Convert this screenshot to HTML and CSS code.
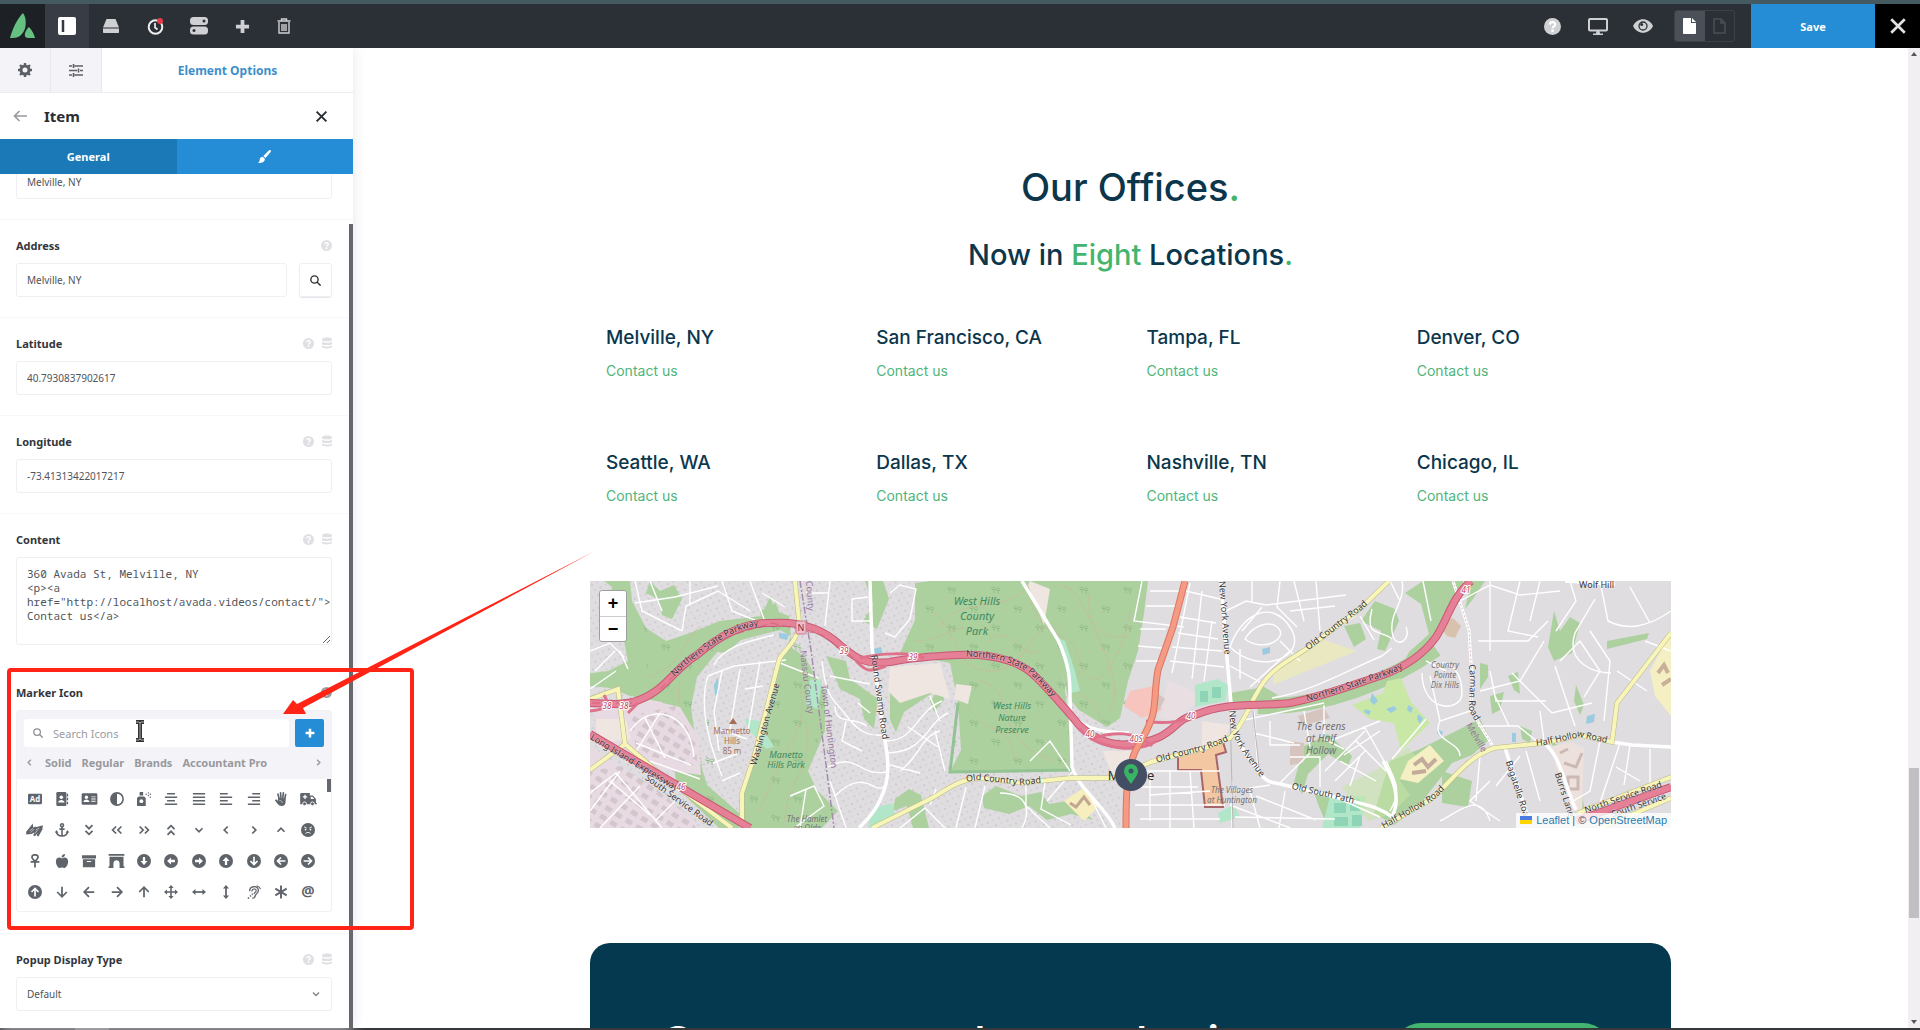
FILE: index.html
```html
<!DOCTYPE html>
<html lang="en">
<head>
<meta charset="utf-8">
<meta name="viewport" content="width=device-width, initial-scale=1">
<title>Avada Live Builder</title>
<link rel="stylesheet" href="styles.css">
</head>
<body>
<svg class="sprite" aria-hidden="true">
  <defs>
    <symbol id="help" viewBox="0 0 16 16"><circle cx="8" cy="8" r="8" fill="currentColor"/><path class="knock" d="M5.400 6.200c.2-3.200 5.300-3 5.200 0 0 1.700-2.500 1.600-2.500 3.400" stroke-width="2" fill="none"/><circle class="knock-fill" cx="8" cy="12" r="1.300"/></symbol>
    <symbol id="data" viewBox="0 0 16 18"><g fill="currentColor"><path d="M0 3c0-4 16-4 16 0v1.500c0 2.500-16 2.500-16 0z"/><path d="M0 7c3 2 13 2 16 0v3.500c0 2.500-16 2.500-16 0z"/><path d="M0 13c3 2 13 2 16 0v2.500c0 3-16 3-16 0z"/></g></symbol>
    <symbol id="search" viewBox="0 0 16 16"><g fill="none" stroke="currentColor" stroke-width="2"><circle cx="6.500" cy="6.500" r="5.300"/><path d="M10.500 10.500l5 5"/></g></symbol>
    <symbol id="plus" viewBox="0 0 16 16"><path fill="currentColor" d="M6 1h4v5h5v4h-5v5H6v-5H1V6h5z"/></symbol>
    <symbol id="cross" viewBox="0 0 16 16"><path d="M2 2l12 12M14 2L2 14" stroke="currentColor" stroke-width="2.400" fill="none"/></symbol>
    <symbol id="ad" viewBox="0 0 16 16"><rect y="2" width="16" height="12" rx="1.500" fill="currentColor"/><text x="8" y="11.500" text-anchor="middle" font-size="9" font-weight="700" fill="#fff">Ad</text></symbol>
    <symbol id="book" viewBox="0 0 16 16"><rect x="1.500" width="11.500" height="16" rx="1.500" fill="currentColor"/><path d="M13.500 2h1.500v3h-1.500zM13.500 6.500h1.500v3h-1.500zM13.500 11h1.500v3h-1.500z" fill="currentColor"/><circle cx="7.200" cy="6" r="2" fill="#fff"/><path d="M3.500 12c.3-4 7-4 7.400 0z" fill="#fff"/></symbol>
    <symbol id="idcard" viewBox="0 0 18 16"><rect y="1.500" width="18" height="13" rx="1.500" fill="currentColor"/><circle cx="5.500" cy="6" r="1.900" fill="#fff"/><path d="M2 11.500c.3-4 6.700-4 7 0zM11 5h5v1h-5zM11 7.500h5v1h-5zM11 10h5v1h-5z" fill="#fff"/></symbol>
    <symbol id="adjust" viewBox="0 0 16 16"><circle cx="8" cy="8" r="7" fill="none" stroke="currentColor" stroke-width="1.800"/><path d="M8 1a7 7 0 0 0 0 14z" fill="currentColor"/></symbol>
    <symbol id="spray" viewBox="0 0 16 16"><g fill="currentColor"><path d="M3 0h4v4H3zM2 5h6c2 1 2 2 2 3v8H0V8c0-1 0-2 2-3z"/><circle cx="10.500" cy="2.500" r=".8"/><circle cx="13" cy="1" r=".8"/><circle cx="13" cy="4" r=".8"/><circle cx="15.200" cy="2.500" r=".8"/><circle cx="15.200" cy="6" r=".8"/></g><circle cx="5" cy="10.500" r="2.200" fill="#fff"/></symbol>
    <symbol id="acenter" viewBox="0 0 16 16"><path d="M3.500 2h9M1 6h14M3.500 10h9M1 14h14" stroke="currentColor" stroke-width="1.800"/></symbol>
    <symbol id="ajustify" viewBox="0 0 16 16"><path d="M1 2h14M1 6h14M1 10h14M1 14h14" stroke="currentColor" stroke-width="1.800"/></symbol>
    <symbol id="aleft" viewBox="0 0 16 16"><path d="M1 2h9M1 6h14M1 10h9M1 14h14" stroke="currentColor" stroke-width="1.800"/></symbol>
    <symbol id="aright" viewBox="0 0 16 16"><path d="M6 2h9M1 6h14M6 10h9M1 14h14" stroke="currentColor" stroke-width="1.800"/></symbol>
    <symbol id="hand" viewBox="0 0 16 16"><path d="M4.500 2.500L6 8M7.500 1l.5 7M10.700 1L10 8M13.300 3L12 9" stroke="currentColor" stroke-width="1.900" stroke-linecap="round"/><path d="M4.500 7h8.700v4.500c0 3-1.500 4.500-4.500 4.500-4 0-5.200-3.500-7.700-6.500.7-1.500 2-1 3.500.7z" fill="currentColor"/><path d="M6 9.500c2 0 3 1 3.500 3" stroke="#fff" stroke-width=".6" fill="none"/></symbol>
    <symbol id="ambulance" viewBox="0 0 19 16"><path d="M1.500 1H11v3h3.500L18 8v4.500h1V14H0V2.500A1.500 1.500 0 0 1 1.500 1z" fill="currentColor"/><path d="M12 5.500h2l2 2.500h-4z" fill="#fff"/><path d="M5.500 3v5M3 5.500h5" stroke="#fff" stroke-width="1.500"/><circle cx="5" cy="13.500" r="2.200" fill="currentColor" stroke="#fff"/><circle cx="14" cy="13.500" r="2.200" fill="currentColor" stroke="#fff"/></symbol>
    <symbol id="sign" viewBox="0 0 19 16"><path d="M0 10L5.500 3l2-2.500L8 5l3-1.200L10 6l1 4-5 2.500-6 .5zM10 5l9-2.500-.5 5L14 15.500l-2-1 1-3-3 3.500-2-1 2-4z" fill="currentColor"/><path d="M4 9l4-3M5 11l4-4M11 8l4-2M10 12l3-4" stroke="#fff" stroke-width=".6"/></symbol>
    <symbol id="anchor" viewBox="0 0 16 16"><g fill="none" stroke="currentColor" stroke-width="1.800"><circle cx="8" cy="2.600" r="1.700"/><path d="M8 4.500V15M5 7h6M1.500 9.500C2 13 5 14.800 8 14.800s6-1.800 6.500-5.300"/></g><path d="M0 11l1.500-3L4 11zM12 11l2.500-3L16 11z" fill="currentColor"/></symbol>
    <symbol id="ddown" viewBox="0 0 16 16"><path d="M4 2.500l4 4 4-4M4 9l4 4 4-4" class="ln"/></symbol>
    <symbol id="dup" viewBox="0 0 16 16"><path d="M4 7l4-4 4 4M4 13.500l4-4 4 4" class="ln"/></symbol>
    <symbol id="dleft" viewBox="0 0 16 16"><path d="M7 4L3 8l4 4M13 4L9 8l4 4" class="ln"/></symbol>
    <symbol id="dright" viewBox="0 0 16 16"><path d="M3 4l4 4-4 4M9 4l4 4-4 4" class="ln"/></symbol>
    <symbol id="cdown" viewBox="0 0 16 16"><path d="M4 6l4 4 4-4" class="ln"/></symbol>
    <symbol id="cup" viewBox="0 0 16 16"><path d="M4 10l4-4 4 4" class="ln"/></symbol>
    <symbol id="cleft" viewBox="0 0 16 16"><path d="M10 4L6 8l4 4" class="ln"/></symbol>
    <symbol id="cright" viewBox="0 0 16 16"><path d="M6 4l4 4-4 4" class="ln"/></symbol>
    <symbol id="angry" viewBox="0 0 16 16"><circle cx="8" cy="8" r="8" fill="currentColor"/><path d="M3.500 4.500l3 1.300M12.500 4.500l-3 1.300M5 12c1.500-1.600 4.500-1.600 6 0" stroke="#fff" fill="none"/><circle cx="5.200" cy="7.500" r="1" fill="#fff"/><circle cx="10.800" cy="7.500" r="1" fill="#fff"/></symbol>
    <symbol id="ankh" viewBox="0 0 16 16"><path d="M8 8.500C5.500 6 4.500 5 4.500 3.500 4.500 0 11.500 0 11.500 3.500c0 1.500-1 2.500-3.500 5zM3 9h10M8 8v7.500" fill="none" stroke="currentColor" stroke-width="2"/></symbol>
    <symbol id="apple" viewBox="0 0 16 16"><path d="M8 5C5 3 1 4 1 8.500 1 12 3.500 16 5.500 16 7 16 7 15.500 8 15.500s1 .5 2.500.5c2 0 4.500-4 4.500-7.500C15 4 11 3 8 5zM7.500 4C7.500 1.500 9 0 11.500 0c0 2.500-1.500 4-4 4z" fill="currentColor"/></symbol>
    <symbol id="archive" viewBox="0 0 16 16"><path d="M0 1.500h16V5H0zM1 6h14v9H1z" fill="currentColor"/><path d="M5.500 8h5v1.200h-5z" fill="#fff"/></symbol>
    <symbol id="arch" viewBox="0 0 18 16"><path d="M0 0h18v2H0zM1 3h16v11h1v2h-5.500v-5c0-5-7-5-7 0v5H0v-2h1z" fill="currentColor"/></symbol>
    <symbol id="disc" viewBox="0 0 16 16"><circle cx="8" cy="8" r="8" fill="currentColor"/><path d="M6.700 3.500h2.600V8H12l-4 4.500L4 8h2.700z" fill="#fff"/></symbol>
    <symbol id="disc2" viewBox="0 0 16 16"><circle cx="8" cy="8" r="8" fill="currentColor"/><path d="M8 3v9M4 8l4 4 4-4" fill="none" stroke="#fff" stroke-width="1.900"/></symbol>
    <symbol id="arrow" viewBox="0 0 16 16"><path d="M8 2v11.500M2.500 8L8 13.500 13.500 8" fill="none" stroke="currentColor" stroke-width="2"/></symbol>
    <symbol id="arrows" viewBox="0 0 16 16"><path d="M8 2v12M2 8h12" stroke="currentColor" stroke-width="1.800"/><path d="M8 0l3 3.500H5zM8 16l3-3.500H5zM0 8l3.500-3v6zM16 8l-3.500-3v6z" fill="currentColor"/></symbol>
    <symbol id="arrowsh" viewBox="0 0 16 16"><path d="M2 8h12" stroke="currentColor" stroke-width="2"/><path d="M0 8l4-3.500v7zM16 8l-4-3.500v7z" fill="currentColor"/></symbol>
    <symbol id="ear" viewBox="0 0 16 16"><g fill="none" stroke="currentColor" stroke-width="1.500"><path d="M3 7c0-6 9-7 10-1 .3 3-3 4-3.500 6S8 15.500 6 15"/><path d="M5.500 7.500c0-3.500 5-4 5-1 0 2-2 1.500-2.500 4" stroke-width="1.300"/><path d="M11 .8c2.500.7 4 2 4.500 4" stroke-width="1.200"/><path d="M1 15.500l1.300-1.300M3.500 13l1-1M5.500 11l1-1" stroke-width="1.700"/></g></symbol>
    <symbol id="asterisk" viewBox="0 0 16 16"><path d="M8 .5v15M1.500 4.200l13 7.600M14.500 4.200l-13 7.600" stroke="currentColor" stroke-width="2.200"/></symbol>
    <symbol id="at" viewBox="0 0 16 16"><text x="8" y="13" text-anchor="middle" font-size="17" font-weight="700" fill="currentColor">@</text></symbol>
  </defs>
</svg>

<header class="topbar">
  <a class="brand" href="#" aria-label="Avada"><svg viewBox="0 0 26 26" width="26" height="26"><path d="M13 0c4 5 4 17-2 22-3 3-7 3-11 3C3 14 8 5 13 0zM19 14c3 3 5 7 6 11h-7c-3 0-4-3-2.500-6 .8-2 2-4 3.500-5z" fill="#65c081"/></svg></a>
  <nav class="tools">
    <button class="tool tool-active" type="button" aria-label="Sidebar"><svg viewBox="0 0 18 18" width="18" height="18"><rect width="18" height="18" rx="2" fill="#fff"/><path d="M5 3v12" stroke="#343941" stroke-width="2.500"/></svg></button>
    <button class="tool" type="button" aria-label="Library"><svg viewBox="0 0 16 14" width="16" height="14"><path d="M3.500 0h9L16 8.500H0zM0 9.500h16V13c0 .6-.4 1-1 1H1c-.6 0-1-.4-1-1z" fill="currentColor"/></svg></button>
    <button class="tool" type="button" aria-label="History"><svg viewBox="0 0 17 17" width="17" height="17"><circle cx="8.500" cy="9" r="6.800" fill="none" stroke="#eee" stroke-width="2"/><path d="M8 5v4.500l2.500 2" stroke="#eee" stroke-width="1.700" fill="none"/><circle cx="13" cy="3" r="3" fill="#e83b49"/></svg></button>
    <button class="tool" type="button" aria-label="Preferences"><svg viewBox="0 0 18 18" width="18" height="18"><rect width="18" height="8" rx="3.500" fill="currentColor"/><rect y="9.500" width="18" height="8" rx="3.500" fill="currentColor"/><circle cx="14" cy="4" r="1.500" fill="#2b3037"/><circle cx="4" cy="13.500" r="1.500" fill="#2b3037"/></svg></button>
    <button class="tool tool-slim" type="button" aria-label="Add"><svg width="15" height="15"><use href="#plus"/></svg></button>
    <button class="tool tool-slim" type="button" aria-label="Delete"><svg viewBox="0 0 14 16" width="14" height="16"><path d="M.5 3h13M4.500 3V1h5v2M2 4v11h10V4M5 6v7M7 6v7M9 6v7" fill="none" stroke="currentColor" stroke-width="1.400"/></svg></button>
  </nav>
  <nav class="tools tools-right">
    <button class="tool" type="button" aria-label="Help"><svg width="17" height="17"><use href="#help"/></svg></button>
    <button class="tool" type="button" aria-label="Screen size"><svg viewBox="0 0 20 17" width="20" height="17"><rect x="1" y="1" width="18" height="11.500" rx="1" fill="none" stroke="currentColor" stroke-width="2"/><path d="M8.500 13h3l.5 2.500h3V17H5v-1.500h3z" fill="currentColor"/></svg></button>
    <button class="tool" type="button" aria-label="Preview"><svg viewBox="0 0 20 14" width="20" height="14"><path d="M0 7C4-2 16-2 20 7c-4 9-16 9-20 0z" fill="currentColor"/><circle cx="10" cy="7" r="4" fill="none" stroke="#2b3037" stroke-width="1.300"/><circle cx="8.700" cy="5.500" r="1.500" fill="#2b3037"/></svg></button>
  </nav>
  <div class="pages">
    <button class="page-button page-on" type="button" aria-label="Page"><svg viewBox="0 0 13 16" width="13" height="16"><path d="M1 0h7v5h5v10c0 .6-.4 1-1 1H1c-.6 0-1-.4-1-1V1c0-.6.400-1 1-1zM9 0l4 4H9z" fill="currentColor"/></svg></button>
    <button class="page-button" type="button" aria-label="Draft"><svg viewBox="0 0 13 16" width="13" height="16"><path d="M1 1h7l4 4v10H1zM8 1v4h4" fill="none" stroke="currentColor" stroke-width="1.500"/></svg></button>
  </div>
  <button class="save" type="button">Save</button>
  <button class="close" type="button" aria-label="Close"><svg width="18" height="18"><use href="#cross"/></svg></button>
</header>

<div class="workspace">
  <aside class="sidebar">
    <nav class="tabs">
      <button class="tab" type="button" aria-label="Settings"><svg viewBox="0 0 14 14" width="14" height="14"><circle cx="7" cy="7" r="4" fill="none" stroke="currentColor" stroke-width="3"/><path d="M7 0v3M7 11v3M0 7h3M11 7h3M2 2l2 2M10 10l2 2M12 2l-2 2M4 10l-2 2" stroke="currentColor" stroke-width="2.400"/></svg></button>
      <button class="tab" type="button" aria-label="Options"><svg viewBox="0 0 14 13" width="14" height="13"><path d="M0 2h3M5.500 2H14M0 6.500h8M11 6.500h3M0 11h3M5.500 11H14M4.500 0v4M9.500 4.500v4M4.500 9v4" stroke="currentColor" stroke-width="1.600"/></svg></button>
      <button class="tab tab-main" type="button">Element Options</button>
    </nav>
    <div class="title-row">
      <button class="plain back" type="button" aria-label="Back"><svg viewBox="0 0 14 12" width="14" height="12"><path d="M14 6H1.500M6.500 1l-5 5 5 5" fill="none" stroke="currentColor" stroke-width="1.600"/></svg></button>
      <h2 class="title">Item</h2>
      <button class="plain" type="button" aria-label="Close item"><svg width="13" height="13"><use href="#cross"/></svg></button>
    </div>
    <div class="modes">
      <button class="mode mode-on" type="button">General</button>
      <button class="mode" type="button" aria-label="Design"><svg viewBox="0 0 13 13" width="13" height="13"><path d="M12.700.3c.5.500.3 1.200-.2 2L7.500 8 5.300 6l5.500-5.400c.7-.6 1.400-.7 1.900-.3zM4.700 6.700l2.200 2c.2 3-2.500 4.800-6.900 4 1.700-.8 1.500-2 1.800-3.700.4-1.500 1.600-2.300 2.900-2.300z" fill="currentColor"/></svg></button>
    </div>
    <div class="scroller">
      <form class="form">
        <div class="field field-cut"><input class="box" type="text" value="Melville, NY" aria-label="Title"></div>
        <div class="field">
          <div class="head"><label for="address">Address</label><svg class="hint" width="11" height="11"><use href="#help"/></svg></div>
          <div class="pair"><input class="box" id="address" type="text" value="Melville, NY"><button class="find" type="button" aria-label="Find"><svg width="11" height="11"><use href="#search"/></svg></button></div>
        </div>
        <div class="field">
          <div class="head"><label for="latitude">Latitude</label><svg class="hint" width="11" height="11"><use href="#help"/></svg><svg class="hint" width="10" height="12"><use href="#data"/></svg></div>
          <input class="box" id="latitude" type="text" value="40.7930837902617">
        </div>
        <div class="field">
          <div class="head"><label for="longitude">Longitude</label><svg class="hint" width="11" height="11"><use href="#help"/></svg><svg class="hint" width="10" height="12"><use href="#data"/></svg></div>
          <input class="box" id="longitude" type="text" value="-73.41313422017217">
        </div>
        <div class="field field-tall">
          <div class="head"><label for="content">Content</label><svg class="hint" width="11" height="11"><use href="#help"/></svg><svg class="hint" width="10" height="12"><use href="#data"/></svg></div>
          <textarea class="box code" id="content" wrap="off">360 Avada St, Melville, NY
&lt;p&gt;&lt;a
href="http://localhost/avada.videos/contact/"&gt;
Contact us&lt;/a&gt;</textarea>
        </div>
        <div class="field field-tall">
          <div class="head"><label for="icons">Marker Icon</label><svg class="hint hint-on" width="11" height="11"><use href="#help"/></svg></div>
          <div class="picker">
            <div class="picker-top">
              <div class="picker-search">
                <div class="search-box"><svg width="10" height="10"><use href="#search"/></svg><input id="icons" type="text" placeholder="Search Icons"></div>
                <button class="add" type="button" aria-label="Add icon set"><svg width="10" height="10"><use href="#plus"/></svg></button>
              </div>
              <div class="sets">
                <button class="plain" type="button" aria-label="Previous"><svg width="11" height="11"><use href="#cleft"/></svg></button>
                <button class="set" type="button">Solid</button>
                <button class="set" type="button">Regular</button>
                <button class="set" type="button">Brands</button>
                <button class="set" type="button">Accountant Pro</button>
                <button class="plain sets-next" type="button" aria-label="Next"><svg width="11" height="11"><use href="#cright"/></svg></button>
              </div>
            </div>
            <div class="icons">
              <button type="button"><svg><use href="#ad"/></svg></button>
              <button type="button"><svg><use href="#book"/></svg></button>
              <button type="button"><svg class="wide"><use href="#idcard"/></svg></button>
              <button type="button"><svg><use href="#adjust"/></svg></button>
              <button type="button"><svg><use href="#spray"/></svg></button>
              <button type="button"><svg><use href="#acenter"/></svg></button>
              <button type="button"><svg><use href="#ajustify"/></svg></button>
              <button type="button"><svg><use href="#aleft"/></svg></button>
              <button type="button"><svg><use href="#aright"/></svg></button>
              <button type="button"><svg><use href="#hand"/></svg></button>
              <button type="button"><svg class="wide"><use href="#ambulance"/></svg></button>
              <button type="button"><svg class="wide"><use href="#sign"/></svg></button>
              <button type="button"><svg><use href="#anchor"/></svg></button>
              <button type="button"><svg><use href="#ddown"/></svg></button>
              <button type="button"><svg><use href="#dleft"/></svg></button>
              <button type="button"><svg><use href="#dright"/></svg></button>
              <button type="button"><svg><use href="#dup"/></svg></button>
              <button type="button"><svg><use href="#cdown"/></svg></button>
              <button type="button"><svg><use href="#cleft"/></svg></button>
              <button type="button"><svg><use href="#cright"/></svg></button>
              <button type="button"><svg><use href="#cup"/></svg></button>
              <button type="button"><svg><use href="#angry"/></svg></button>
              <button type="button"><svg><use href="#ankh"/></svg></button>
              <button type="button"><svg><use href="#apple"/></svg></button>
              <button type="button"><svg><use href="#archive"/></svg></button>
              <button type="button"><svg class="wide"><use href="#arch"/></svg></button>
              <button type="button"><svg><use href="#disc"/></svg></button>
              <button type="button"><svg class="west"><use href="#disc"/></svg></button>
              <button type="button"><svg class="east"><use href="#disc"/></svg></button>
              <button type="button"><svg class="north"><use href="#disc"/></svg></button>
              <button type="button"><svg><use href="#disc2"/></svg></button>
              <button type="button"><svg class="west"><use href="#disc2"/></svg></button>
              <button type="button"><svg class="east"><use href="#disc2"/></svg></button>
              <button type="button"><svg class="north"><use href="#disc2"/></svg></button>
              <button type="button"><svg><use href="#arrow"/></svg></button>
              <button type="button"><svg class="west"><use href="#arrow"/></svg></button>
              <button type="button"><svg class="east"><use href="#arrow"/></svg></button>
              <button type="button"><svg class="north"><use href="#arrow"/></svg></button>
              <button type="button"><svg><use href="#arrows"/></svg></button>
              <button type="button"><svg><use href="#arrowsh"/></svg></button>
              <button type="button"><svg class="west"><use href="#arrowsh"/></svg></button>
              <button type="button"><svg><use href="#ear"/></svg></button>
              <button type="button"><svg><use href="#asterisk"/></svg></button>
              <button type="button"><svg><use href="#at"/></svg></button>
            </div>
            <span class="picker-thumb"></span>
          </div>
        </div>
        <div class="field field-last">
          <div class="head"><label for="popup">Popup Display Type</label><svg class="hint" width="11" height="11"><use href="#help"/></svg><svg class="hint" width="10" height="12"><use href="#data"/></svg></div>
          <div class="select"><select class="box" id="popup"><option>Default</option></select><svg width="12" height="12"><use href="#cdown"/></svg></div>
        </div>
      </form>
      <span class="side-thumb"></span>
    </div>
  </aside>

  <main class="canvas">
    <section class="offices">
      <h1>Our Offices<span class="accent">.</span></h1>
      <p class="lead">Now in <span class="accent">Eight</span> Locations<span class="accent">.</span></p>
      <div class="cities">
        <div><h3>Melville, NY</h3><a href="#">Contact us</a></div>
        <div><h3>San Francisco, CA</h3><a href="#">Contact us</a></div>
        <div><h3>Tampa, FL</h3><a href="#">Contact us</a></div>
        <div><h3>Denver, CO</h3><a href="#">Contact us</a></div>
        <div><h3>Seattle, WA</h3><a href="#">Contact us</a></div>
        <div><h3>Dallas, TX</h3><a href="#">Contact us</a></div>
        <div><h3>Nashville, TN</h3><a href="#">Contact us</a></div>
        <div><h3>Chicago, IL</h3><a href="#">Contact us</a></div>
      </div>
      <div class="map">
        <svg class="map-art" viewBox="0 0 1081 247" preserveAspectRatio="xMidYMid slice">
          <defs>
            <pattern id="houses" width="9" height="8" patternUnits="userSpaceOnUse" patternTransform="rotate(18)"><path d="M2 2h2v2H2zM6.500 6h1.500v1.500H6.500z" fill="#cfcbd0"/></pattern>
            <pattern id="trees" width="44" height="38" patternUnits="userSpaceOnUse"><path d="M8 12v-3M6 8.500a1.700 1.700 0 1 1 3 0zM12 13v-3M10.500 9.500a1.700 1.700 0 1 1 3 0zM30 31v-3M28 27.500a1.700 1.700 0 1 1 3 0zM34 32v-3M32.500 28.500a1.700 1.700 0 1 1 3 0z" fill="none" stroke="#8dbb86" stroke-width=".9"/></pattern>
            <pattern id="plants" width="12" height="10" patternUnits="userSpaceOnUse" patternTransform="rotate(32)"><rect x="1" y="1" width="7" height="5" fill="#d3c7cc"/></pattern>
            <path id="nsp" d="M0 122C15 122 27 125 43 121C75 112 83 88 107 74C130 54 155 41 182 42C215 40 235 50 250 64C265 76 272 84 300 81C325 76 345 75 368 74C410 72 435 84 446 96C462 112 474 126 489 144C506 160 522 165 539 163C585 160 582 138 605 134C640 120 665 126 700 122C735 115 765 103 793 94C820 84 836 70 846 56C858 38 862 16 881 0"/>
            <path id="ocr" d="M282 247L332 222C355 212 362 200 388 197L432 202L480 197L525 197L561 181L615 167L640 157C656 140 660 122 667 112C680 86 700 80 722 64L772 26L799 0"/>
            <path id="hhr" d="M791 247L840 219C860 203 876 176 904 167L954 162L990 154L1022 161L1027 122L1081 52"/>
            <path id="wash" d="M205 0L209 40C210 60 192 70 189 79L178 122L164 176L152 212L152 239"/>
            <path id="nya" d="M631 0L636 66L641 122C641 155 650 165 668 189C674 199 680 202 686 202L758 219C776 224 790 226 802 236"/>
            <path id="rsr" d="M280 0L282 66L288 110L293 149C297 170 300 185 296 203C290 224 282 234 269 247"/>
            <path id="carman" d="M863 0L879 49L882 99L881 129L904 167"/>
          </defs>
          <rect width="1081" height="247" fill="#dfdde0"/>
          <rect width="530" height="247" fill="url(#houses)"/>
          <g fill="#add09f">
            <path d="M14 0h26l2 20 14 27 20 13 24-8 30-12 42-5 8-20 5 15 14 5 3 32-30 8-45-4-20 25-6 30 6 45 10 33 32 28v15h-20l-42-40-3-22 6-28-18-36-32-6-20-8-38-4 4-9 32-4 20-10-6-30-14-20 4-24z"/>
            <path d="M195 62l20 14 11 20 9 14v40l-17 40 7 15-15 42h-57l-1-30 14-40 10-50z"/>
            <path d="M325 2l16-2h91l36 56 10 76 4 57-122 2 11-22-3-47-8-40-50-10 15-33z"/>
            <path d="M432 0h126l-4 32-6 38-10 30-8 37-13 9-28-17-11-13-14-60z"/>
            <path d="M60 0l10 10 14-6 8 14-10 20-10-4-4-16-12-6zM170 30l16-8 6 18-20 4zM236 75l20 5 4 18 28 20-4 30-10-10-4-20-20-10zM300 105l10 10 20-4 8-15 6 15-30 20-8 20-6-12zM340 120l12-15 2 14-10 12zM275 0h18l6 18-12 30-14-8 10-16zM178 214l28 10-6 10-34-12zM218 200l30 30-16 17h-22zM305 218l14-10 12 6 8 33h-16l-6-22-14 5zM392 215l14-10 25 10 20-4 8 12 24-4 20 20-22-6-24 6-18-14-20 8-25-6z"/>
            <path d="M640 112l34-6 14 8-22 12-26 2zM815 12l18-12h40v10l-14 26-30 40-20 15 10-20 20-18-8-30zM785 20l20 8 4 12-14 30-8-2 4-18-20-10zM754 45l16-3 6 16-12 8zM881 0h14l-12 18-8 10zM714 165l24-12 24 22-4 10-20-12-20 20-6 20-8-12zM722 206l20 12 10 29h-14l-10-24zM800 180l30-12 60-30 10 20-18 16-20 8-34 44-24 18-20-12zM852 190l30 10-4 26-26-4zM964 30l6 20 10-14 10 6-8 30-18 8-6-14zM1017 60l42-8-2 6-40 10zM930 145l12 5-2 12-8-4zM890 82l8 2v12l-8 12zM918 95l10-4 2 22-6-4zM986 104l8 20-4 10-6-14zM900 115l14-4-4 18-8 4zM960 160l20 10 8 14 8 56-10-6-12-48z"/>
          </g>
          <path d="M668 125C735 127 800 100 846 68" fill="none" stroke="#add09f" stroke-width="16"/>
          <path d="M325 2l16-2h217l-8 70-20 76-52-14 4 57-122 2 8-110-45-10z" fill="url(#trees)"/>
          <path d="M14 0h26l16 47 20 13 124-24 13 37-75 20-12 60 42 94h-20l-42-40-3-22-12-50-32-20-6-75zM195 62l40 60-17 90-15 35h-50z" fill="url(#trees)"/>
          <path d="M368 122l-8 69 122-2-2-40" fill="none" stroke="#93c393" stroke-width="3"/>
          <g fill="none" stroke="#dca79b" stroke-width=".7" stroke-dasharray="2 1.500">
            <path d="M341 30c30 20 20 60 60 60s40-60 70-40M350 45c20-30 60-10 90-40M375 120c30 50 40 10 50 60M390 100c40 10 10 60 75 80M440 20c20 50 40 20 50 60s40 10 50-50M470 5c30 0 20 60 70 50M490 90c-20 30 20 20 20 50M500 10c-10 40 40 80 20 120M400 60c20-20 30 20 50 10M325 60c30 0 40-20 60-10"/>
            <path d="M60 95c30-10 30-30 50-50M90 100c-10 40 30 60 20 100M170 230c20-60 50-80 40-120M195 240c0-40 30-50 20-100"/>
          </g>
          <path d="M5 130l50-12 35 8 18 30 3 38-70-10-36-20zM0 166l40 25 60 45 10 11H0z" fill="#e8dae3"/>
          <path d="M40 135l45-10 22 40v20l-60-12zM0 190l36-6 60 48 10 15H0z" fill="url(#plants)"/>
          <path d="M121 84l30-25 39-10 11 6-19 50-18 70-14 31-18-4-11-51-6-38z" fill="#dfdde0"/><path d="M121 84l30-25 39-10 11 6-19 50-18 70-14 31-18-4-11-51-6-38z" fill="url(#houses)"/>
          <path d="M300 86l50-4 10 36-20-6-30 10-12-12zM6 138h30l5 20-34 4zM513 170l30 0-2 26-20-4zM612 140l28 4-4 15-24 6zM440 0l20 8-6 36-16-40zM366 103l16 2-4 18-14-5z" fill="#efe5e1"/>
          <path d="M540 110l24-5 8 24-20 8-18-12z" fill="#f8c4be"/>
          <path d="M578 100l22 8 10 10-24 22-16-4z" fill="#e9dfe3"/>
          <g fill="#b1e6c8"><path d="M605 104l22-6 12 6-4 16-30 6zM467 56l8 4 10 30 5 20-10 2-4-25zM155 138l15 2 8 16 6 10-8 2-18-20zM220 98l12 2-4 28-12-4zM282 228l20-6 4 16-28 9zM740 215h36l-6 32h-38zM628 232l16-8 6 12-20 6z"/></g>
          <g fill="#8ed5b8"><path d="M744 222h12v10h-12zM760 218h10v12h-10zM744 236h14v9h-14zM762 234h10v11h-10zM610 110h8v11h-8zM622 106h9v11h-9z"/></g>
          <path d="M683 92l10-10 38-24 36 12-60 24-24 10z" fill="#e9e8c0"/>
          <path d="M474 220l18-12 18 16-16 16z" fill="#f6eebd"/><path d="M480 222l6 4 8-10 6 8" fill="none" stroke="#c2a694" stroke-width="3"/>
          <path d="M762 124l31-12 4-12 14-3 10 24 19 21-15 14-14 14-7-28-24-4z" fill="#c9e8a6"/>
          <path d="M752 206l36-18 30-22 8 10-16 24 10 14-20 20-22 6z" fill="#c5e5a5" opacity=".55"/>
          <path d="M818 180l22-16 14 16-26 22-18-4z" fill="#f5efc4"/><path d="M824 184l8-6 6 8 8-8M822 192l14-2" fill="none" stroke="#c3ab9c" stroke-width="4"/>
          <path d="M588 172l45-11 3 10-10 3 7 52h-18l-4-37h-23z" fill="#f2c7a1" stroke="#a8656a" stroke-width="2"/>
          <path d="M1060 90l21-40v85l-16-20z" fill="#f5efc4"/><path d="M962 165l20-4 12 6-2 70-10-10-16-40z" fill="#ece1dd"/>
          <path d="M970 172l8-4M974 182l12 4 6-14M978 196h10v12h-10z" stroke="#cdb9b4" stroke-width="3" fill="none"/>
          <path d="M1068 92l6-8 4 8M1072 104l9-6" stroke="#c8b09a" stroke-width="4" fill="none"/>
          <path d="M708 135l26-8 6 10-28 8zM565 110l10 8-8 14M590 118l8-8M700 160l14 2v20l-14 2z" fill="#d6c5bf"/>
          <path d="M855 40l8-3 8 8-6 12-8-2-6-8z" fill="#d9c2ad"/>
          <g fill="#9bcbe0"><path d="M782 112l6 8-4 4-4-4zM796 128l8-3 3 3-6 4zM818 124l5 3-2 5-4-3zM828 133l5 4-3 6-3-5zM775 128l6 2-2 4-5-3zM997 135l8-2-1 8-8 2zM848 148l5 3-2 5-4-4zM672 68l8-2v6l-7 2zM283 68l8-2 2 8-9 2zM922 152h4v9h-4zM124 104l4-8 1 16-4 3zM189 52l10 1-2 6-8-2z"/></g>
          <g fill="none" stroke="#fff" stroke-width="1.400">
            <path d="M45 0L52 30 92 50M60 0L72 30M45 22L85 16 128 5M92 50L96 25 128 10 160 30M100 0v24M132 0l10 30 30 12M160 0l14 38M172 12L195 26M240 0l-5 45M216 12h22M262 18l16-2M262 18v22h20M300 12l10-8 16 4-6 30-15 18-10-4"/>
            <path d="M0 70l20-8 14 14M5 90l20-20M0 108l26-18M30 70l8 18"/>
            <path d="M118 95l26-10 52-6M124 84c10-20 40-25 60-30M118 95c-10 30 2 70 14 100M132 90l-8 40 5 40M150 88l-10 60M170 80l-12 70M129 148l28 10M123 182l26-10M155 108l18-3M132 200l18-8M190 82l38 15"/>
            <path d="M40 150c20-30 60-20 64 26M46 162l55 22M55 137l20 40M70 132l-25 40M20 200l40 34M0 212l26-20 46 55M30 190l-30 40M50 205l-40 42M60 180l50 18M85 220l-20 20"/>
            <path d="M232 80c4 40 14 40 24 54s20 22 38 20M240 95l40 8M245 125c0 20 20 10 32 20M256 140l-4 20 20 10M238 186c30-16 30 10 58 5M245 215c30-30 40 0 50-10M240 200l16 47M268 122l12 10M296 160c30 0 30-30 56-40M296 172c40 0 40-30 62-40M310 190c20-14 20-34 40-40M300 184l30 8M318 146l30 20M340 115l10 25M345 150l10 40"/>
            <path d="M310 247l25-20 20 20M340 224l6-16M376 206l-10 41M395 205l-10 42M410 212c30 0 30 20 22 35M436 205v20l24 22M455 202l-4 26 30 16M483 190l-26 30M440 180l20-20 20 30M500 215l16 32M200 215l24-10 10 20-30 22M216 208l-6 39"/>
            <path d="M552 0l-8 40 50 6M560 10h32M556 25h34M550 48h26M548 65l24 2M546 80h24M596 10l34 8M590 36l36 6M588 52l40 6M600 2l-18 90M582 66l50 4M580 80l54 6M612 10l-10 88M622 40l-8 60"/>
            <path d="M636 30l20-10 20 4 80-10M640 66c10-30 40-50 60-20s-30 50-60 20zM655 58c8-14 26-20 34-10s-16 24-34 10zM662 0v20M690 0l-3 26 20 20M704 0l10 40M650 68v30M690 60l20 20M640 85l30 16M672 26l-20 24M726 0l4 50M700 30l45-5M735 55l30-20M700 70l-40 36"/>
            <path d="M682 117c40-6 80-30 110-42l10-8M782 28c-8 30 10 20 20 30M812 0c4 20-12 30-10 50s20 10 14-4M770 35l14 24M800 0l10 20M833 0l8 40M870 20l30-16 30 10 40-4M900 0v70M930 0l-12 50 30 6M888 60h50l20-20M950 0l-10 40M980 0l6 20-20 30M1010 0l8 40c20 10 40 6 63-10M1040 6l20 36M890 110l40-10 24-40M922 92l40 40 40-10M900 90l6 30 50 0M1000 50l20 30-6 60M970 80l20-20 20 30-16 26M985 145l-20-60M1005 18l-20 34c-10 30 20 40 36 40M1055 60l26 10M1027 90l30 20"/>
            <path d="M836 80l20 10M832 92c0 40 40 40 40 20s-10-30-20-30M840 95l10 45M880 130l-30 10c-10 20 20 20 20 35M905 115l14 30M888 145l40 0 20 16M950 130l4 30M1010 160l-10 50-20 12M1030 162l-20 60M1040 164l-6 40M1050 200l-24-14M1060 168v38"/>
            <path d="M650 140l84-18M734 124v34l20 10M664 130l4 60M680 140v24h30M714 130l6 36M664 152l40 10M700 176h30v30M690 202l30-30M640 210l40-6M550 190h80M548 206h60M545 224h90M560 190v50M580 190v57M600 190l4 57M550 238h80M560 214l60-4M642 200v47M640 224l60 23M660 210l10 37M695 210l-6 37M645 236l100 2M735 190l40-40M745 200l30-30M760 205l10-30M750 180l36 20M766 160l30 30M774 145l20 35M740 160l50-20M790 150l-36 24M796 180c10 20 16 30 4 50M890 175l-4 45M900 200l-20 20 30 20M930 175l-24 30M936 170l14 50M850 240c20-10 40-30 50 0M790 236l-36-16M666 215l60 24M802 178l34-40"/>
          </g>
          <path d="M640 125L643 247M663 130l6 56" stroke="#b9b4b8" fill="none"/>
          <g fill="none">
            <path d="M210 0L221 69L235 176L244 247" stroke="#a48cae" stroke-width="1.500" stroke-dasharray="7 2 2 2"/>
            <g stroke="#fff" stroke-width="3.500"><use href="#rsr"/><use href="#nya"/><path d="M432 0L468 59C480 85 480 100 480 116L482 186C490 210 515 225 525 247M1022 161l20 3 39 2M954 162c16 12 20 40 32 67M915 167l23 69M480 130c10 20 40 22 59 22M802 236c10-20 0-40-9-56M975 0l50 3"/></g>
            <use href="#carman" stroke="#fff" stroke-width="3"/><use href="#carman" stroke="#d9b9bd" stroke-width="1" stroke-dasharray="2 2"/>
            <g stroke="#b9b884" stroke-width="5"><use href="#ocr"/><use href="#hhr"/><use href="#wash"/><path d="M0 118l28-10 7 55-35 26M35 163l28 24 79 60M988 232l93-36M1010 247l71-30"/></g>
            <g stroke="#f7f5b8" stroke-width="4"><use href="#ocr"/><use href="#hhr"/><use href="#wash"/><path d="M0 118l28-10 7 55-35 26M35 163l28 24 79 60M988 232l93-36M1010 247l71-30"/></g>
            <g stroke="#c85873" stroke-width="8"><use href="#nsp"/><path d="M0 153L160 247M986 240L1081 206"/></g>
            <g stroke="#e58096" stroke-width="6"><use href="#nsp"/><path d="M0 153L160 247M986 240L1081 206"/></g>
            <path d="M489 148C510 170 550 172 566 160M500 158C525 150 545 150 562 165M266 80c10 10 12 12 30 5M270 77c20-5 50-6 64 0M0 130c20-2 20-6 14-16M38 132l10-10M556 140c20 4 40 0 50-7" stroke="#df718a" stroke-width="3"/>
            <path d="M2 122h40M70 108l50-47 62-19 50 12 36 26" stroke="#cd5e79" stroke-width=".8" stroke-dasharray="8 4"/>
            <path d="M595 0L583 46L568 89C564 110 566 130 561 139C556 155 546 165 543 176C536 200 536 220 536 247" stroke="#dc7563" stroke-width="7"/>
            <path d="M595 0L583 46L568 89C564 110 566 130 561 139C556 155 546 165 543 176C536 200 536 220 536 247" stroke="#f59a83" stroke-width="5"/>
          </g>
          <rect x="206" y="40" width="10" height="13" rx="1" fill="#f0bcc8" stroke="#c77f92"/>
          <g class="road-names">
            <text><textPath href="#nsp" startOffset="92">Northern State Parkway</textPath></text>
            <text><textPath href="#nsp" startOffset="412">Northern State Parkway</textPath></text>
            <text><textPath href="#nsp" startOffset="794">Northern State Parkway</textPath></text>
            <text><textPath href="#ocr" startOffset="106">Old Country Road</textPath></text>
            <text><textPath href="#ocr" startOffset="300">Old Country Road</textPath></text>
            <text><textPath href="#ocr" startOffset="498">Old Country Road</textPath></text>
            <text><textPath href="#hhr" startOffset="2">Half Hollow Road</textPath></text>
            <text><textPath href="#hhr" startOffset="182">Half Hollow Road</textPath></text>
            <text><textPath href="#nya" startOffset="0">New York Avenue</textPath></text>
            <text><textPath href="#nya" startOffset="130">New York Avenue</textPath></text>
            <text><textPath href="#nya" startOffset="236">Old South Path</textPath></text>
            <text><textPath href="#rsr" startOffset="74">Round Swamp Road</textPath></text>
            <text><textPath href="#carman" startOffset="86">Carman Road</textPath></text>
            <text transform="translate(164 184) rotate(-74)">Washington Avenue</text>
            <text transform="translate(1 156) rotate(31)">Long Island Expressway</text>
            <text transform="translate(56 196) rotate(36)">South Service Road</text>
            <text transform="translate(918 180) rotate(72)">Bagatelle Road</text>
            <text transform="translate(967 192) rotate(72)">Burrs Lane</text>
            <text transform="translate(995 230) rotate(-19)">North Service Road</text>
            <text transform="translate(1022 234) rotate(-19)">South Service</text>
            <text x="989" y="5">Wolf Hill</text>
          </g>
          <g class="bounds">
            <text transform="translate(216 0) rotate(86)">County</text>
            <text transform="translate(210 70) rotate(83)">Nassau County</text>
            <text transform="translate(231 104) rotate(83)">Town of Huntington</text>
            <text transform="translate(876 144) rotate(60)">Melville</text>
          </g>
          <g class="exits"><text x="17" y="128">38</text><text x="34" y="128">38</text><text x="254" y="73">39</text><text x="323" y="79">39</text><text x="500" y="156">40</text><text x="91" y="209">46</text><text x="601" y="138">40</text><text x="546" y="161">40S</text><text x="876" y="12">41</text></g>
          <g class="parks"><text x="387" y="24">West Hills</text><text x="387" y="39">County</text><text x="387" y="54">Park</text></g>
          <g class="parks parks-small"><text x="422" y="128">West Hills</text><text x="422" y="140">Nature</text><text x="422" y="152">Preserve</text><text x="196" y="177">Manetto</text><text x="196" y="187">Hills Park</text></g>
          <g class="places"><text x="731" y="149">The Greens</text><text x="731" y="161">at Half</text><text x="731" y="173">Hollow</text></g>
          <g class="places places-small"><text x="855" y="87">Country</text><text x="855" y="97">Pointe</text><text x="855" y="107">Dix Hills</text><text x="642" y="212">The Villages</text><text x="642" y="222">at Huntington</text><text x="217" y="241">The Hamlet</text><text x="217" y="250">on Olde</text></g>
          <g class="peak"><path d="M139 143l4-6 4 6z"/><text x="142" y="153">Mannetto</text><text x="142" y="163">Hills</text><text x="142" y="173">85 m</text></g>
          <text x="211" y="50" class="shield">N</text>
          <text x="541" y="199" class="town">Melville</text>
          <circle cx="541" cy="194" r="16" fill="#434d64"/>
          <path d="M541 203c-4-6-7-9-7-13a7 7 0 0 1 14 0c0 4-3 7-7 13z" fill="#37b464"/><circle cx="541" cy="190" r="2.500" fill="#434d64"/>
        </svg>
        <div class="zoom"><button type="button">+</button><button type="button">−</button></div>
        <p class="credit"><svg viewBox="0 0 12 8" width="12" height="8"><path fill="#4c7be1" d="M0 0h12v4H0z"/><path fill="#ffd500" d="M0 4h12v4H0z"/></svg><a href="#">Leaflet</a> | © <a href="#">OpenStreetMap</a></p>
      </div>
      <div class="cta"><p>Get a personal consultation</p><a class="cta-link" href="#" aria-label="Contact us"></a></div>
    </section>
  </main>
  <div class="scrollbar"><svg viewBox="0 0 6 4" width="6" height="4"><path d="M0 4l3-4 3 4z"/></svg><span class="thumb"></span><svg viewBox="0 0 6 4" width="6" height="4"><path d="M0 0l3 4 3-4z"/></svg></div>
</div>
<footer class="edge"><span></span></footer>

<svg class="note" width="600" height="400" viewBox="0 540 600 400" aria-hidden="true">
  <rect x="9" y="670" width="403" height="258" rx="2" fill="none" stroke="#ff2415" stroke-width="4"/>
  <path d="M595 551L303 708l3 6-23 0 10-14 4 4z" fill="#ff2415"/>
</svg>
<svg class="cursor" width="12" height="22" viewBox="0 0 12 22" aria-hidden="true"><path d="M2 2h3l1 1 1-1h3M6 3v16M2 20h3l1-1 1 1h3" fill="none" stroke="#333" stroke-width="4"/><path d="M2 2h3l1 1 1-1h3M6 3v16M2 20h3l1-1 1 1h3" fill="none" stroke="#aaa" stroke-width="1"/></svg>
</body>
</html>
```

FILE: styles.css
```css
* { box-sizing: border-box; }
body { margin: 0; height: 100vh; display: flex; flex-direction: column; overflow: hidden; position: relative; font-family: "Noto Sans", "Open Sans", sans-serif; font-size: 11px; color: #32363c; background: #fff; }
button, input, textarea, select { font: inherit; color: inherit; margin: 0; }
button { border: 0; padding: 0; background: none; display: flex; align-items: center; justify-content: center; }
h1, h2, h3, p { margin: 0; }
a { text-decoration: none; }
.sprite { position: absolute; width: 0; height: 0; }
.knock { stroke: #fff; }
.knock-fill { fill: #fff; }
.ln { fill: none; stroke: currentColor; stroke-width: 2; }

/* Top bar */
.topbar { flex: none; height: 48px; display: flex; position: relative; z-index: 2; background: #2b3037; border-top: 4px solid #455a60; color: #cfd0d2; }
.brand { width: 45px; background: #1d2024; display: flex; align-items: center; justify-content: center; }
.tools { display: flex; }
.tools-right { margin-left: auto; }
.tool { width: 44px; }
.tools-right .tool { width: 45px; }
.tool-active { background: #373c45; }
.tool-slim { width: 42px; }
.topbar .knock { stroke: #2b3037; }
.topbar .knock-fill { fill: #2b3037; }
.pages { display: flex; align-self: center; height: 32px; width: 61px; margin: 0 16px 0 9px; border: 1px solid #3c4148; border-radius: 3px; overflow: hidden; }
.page-button { flex: 1; color: #4a4f56; }
.page-on { background: #4a4f58; color: #fff; }
.save { width: 124px; background: #248dd6; color: #fff; font-weight: 700; }
.close { width: 45px; background: #000; color: #e2e2e2; }

/* Sidebar */
.workspace { flex: 1; min-height: 0; display: flex; }
.sidebar { width: 353px; flex: none; display: flex; flex-direction: column; background: #fff; box-shadow: 0 0 12px #e6e3ea; z-index: 1; }
.tabs { flex: none; height: 45px; display: flex; border-bottom: 1px solid #ececf0; }
.tab { width: 51px; background: #f4f3f8; border-right: 1px solid #e9e8ee; color: #5c6066; }
.tab-main { flex: 1; border: 0; background: #fff; color: #3d8fcb; font-size: 12px; font-weight: 700; }
.plain { color: inherit; }
.title-row { flex: none; height: 46px; padding: 0 25px 0 13px; display: flex; align-items: center; gap: 17px; color: #2a2e34; }
.title { flex: 1; font-size: 15px; font-weight: 700; }
.back { color: #95989c; }
.modes { flex: none; height: 35px; display: flex; background: #248dd6; color: #fff; }
.mode { flex: 1; font-weight: 700; }
.mode-on { background: #1b79b8; }
.scroller { flex: 1; min-height: 0; overflow: hidden; position: relative; }
.side-thumb { position: absolute; top: 50px; bottom: 0; right: 0; width: 4px; background: #65696f; }

.field { padding: 16px 21px 20px 16px; border-bottom: 1px solid #f8f8fa; }
.field-cut { padding-top: 0; margin-top: -9px; }
.field-tall { padding-bottom: 21px; }
.field-last { border: 0; }
.head { height: 18px; margin-bottom: 9px; display: flex; align-items: center; gap: 8px; font-weight: 700; }
.head label { margin-right: auto; }
.hint { color: #e0dfe3; }
.hint-on { color: #9b9ca0; }
.box { display: block; width: 100%; height: 34px; padding: 0 10px; border: 1px solid #efeff2; border-radius: 3px; background: #fff; color: #505459; outline: 0; font-size: 10px; }
.pair { display: flex; gap: 12px; }
.find { flex: none; width: 33px; border: 1px solid #efeff2; border-radius: 3px; box-shadow: 0 1px 1px #e6e3ea; color: #2a2e34; }
.code { height: 88px; padding: 9px 0 0 10px; font-family: "Noto Sans Mono", "DejaVu Sans Mono", "Liberation Mono", monospace; font-size: 11px; line-height: 14px; overflow: hidden; resize: vertical; }
.select { position: relative; color: #85888c; }
.select select { appearance: none; }
.select svg { position: absolute; right: 10px; top: 11px; }

.picker { height: 202px; border: 1px solid #f1f0f4; border-radius: 3px; position: relative; }
.picker-top { height: 68px; padding: 8px 7px 0; background: #f4f3f8; }
.picker-search { display: flex; gap: 6px; height: 28px; }
.search-box { flex: 1; display: flex; align-items: center; gap: 10px; padding-left: 9px; background: #fff; border-radius: 3px; color: #8c8e92; }
.search-box input { flex: 1; min-width: 0; border: 0; padding: 0; outline: 0; background: none; }
.search-box input::placeholder { color: #9b9b9f; }
.add { width: 29px; background: #248dd6; color: #fff; border-radius: 2px; }
.sets { height: 30px; display: flex; align-items: center; gap: 10px; color: #98999d; }
.set { font-weight: 700; }
.sets-next { margin-left: auto; }
.icons { display: grid; grid-template-columns: repeat(11, 1fr); grid-auto-rows: 31px; padding: 4px 9px 0 4px; color: #5f646b; }
.icons svg { width: 14px; height: 14px; }
.icons .wide { width: 17px; }
.icons .west { transform: rotate(90deg); }
.icons .east { transform: rotate(-90deg); }
.icons .north { transform: rotate(180deg); }
.picker-thumb { position: absolute; right: 0; top: 68px; width: 4px; height: 13px; background: #65696f; }

/* Page preview */
.canvas { flex: 1; min-width: 0; overflow: hidden; font-family: Inter, "Liberation Sans", sans-serif; color: #0b364c; }
.offices { max-width: 1081px; margin: 0 auto; padding-top: 115px; }
.offices h1, .lead { text-align: center; font-weight: 500; }
.offices h1 { font-size: 38px; line-height: 48px; }
.lead { font-size: 29px; line-height: 40px; margin: 24px 0 48px; }
.accent { color: #43b56f; }
.cities { display: grid; grid-template-columns: repeat(4, 1fr); row-gap: 67px; padding-left: 16px; margin-right: -16px; }
.cities h3 { font-size: 19px; line-height: 30px; font-weight: 500; margin-bottom: 8px; }
.cities a { display: block; font-size: 14px; line-height: 20px; color: #50b57a; }

.map { position: relative; height: 247px; margin: 75px 0 115px; overflow: hidden; }
.map-art { display: block; width: 100%; height: 100%; font-family: "Noto Sans", sans-serif; }
.road-names { font-size: 9px; fill: #3b3438; paint-order: stroke; stroke: #ffffff55; stroke-width: 1px; }
.road-names text { dominant-baseline: middle; }
.bounds { font-size: 9px; fill: #96759e; }
.exits { font-size: 8px; font-style: italic; fill: #b8425f; stroke: #fff; stroke-width: 2px; paint-order: stroke; }
.parks, .places, .peak, .shield, .town, .exits { text-anchor: middle; }
.parks { font-size: 11px; font-style: italic; fill: #3f8a5d; }
.parks-small { font-size: 9px; }
.places { font-size: 10px; font-style: italic; fill: #757277; }
.places-small { font-size: 8px; }
.peak { font-size: 8px; fill: #a56f57; }
.shield { font-size: 9px; fill: #7c3048; }
.town { font-size: 13px; fill: #2c2c2c; }
.zoom { position: absolute; left: 9px; top: 9px; width: 28px; border: 1px solid #9f9f9f; border-radius: 3px; overflow: hidden; }
.zoom button { width: 100%; height: 25px; background: #fff; color: #000; font: 700 18px "Liberation Sans", sans-serif; }
.zoom button + button { border-top: 1px solid #ccc; }
.credit { position: absolute; right: 0; bottom: 0; padding: 0 4px; background: #ffffffcc; color: #555; font: 11px/15px "Liberation Sans", sans-serif; }
.credit svg { margin-right: 4px; }
.credit a { color: #2a7db0; }

.cta { display: flex; justify-content: space-between; align-items: flex-start; height: 260px; padding: 76px 60px 0 70px; border-radius: 20px; background: #05394f; }
.cta p { color: #fff; font-size: 47px; line-height: 48px; font-weight: 500; }
.cta-link { width: 218px; height: 56px; margin-top: 4px; border-radius: 28px; background: #42b46f; }

.scrollbar { width: 12px; flex: none; display: flex; flex-direction: column; align-items: center; padding: 4px 0; background: #f1eff2; fill: #55565a; }
.thumb { width: 10px; height: 150px; margin: auto 0 102px; background: #c1bfc3; }
.edge { flex: none; height: 2px; background: #36383b; padding-left: 75px; display: flex; }
.edge span { width: 34px; background: #606366; }

.note { position: absolute; left: 0; top: 540px; z-index: 2; pointer-events: none; }
.cursor { position: absolute; left: 134px; top: 720px; z-index: 2; pointer-events: none; }
```
